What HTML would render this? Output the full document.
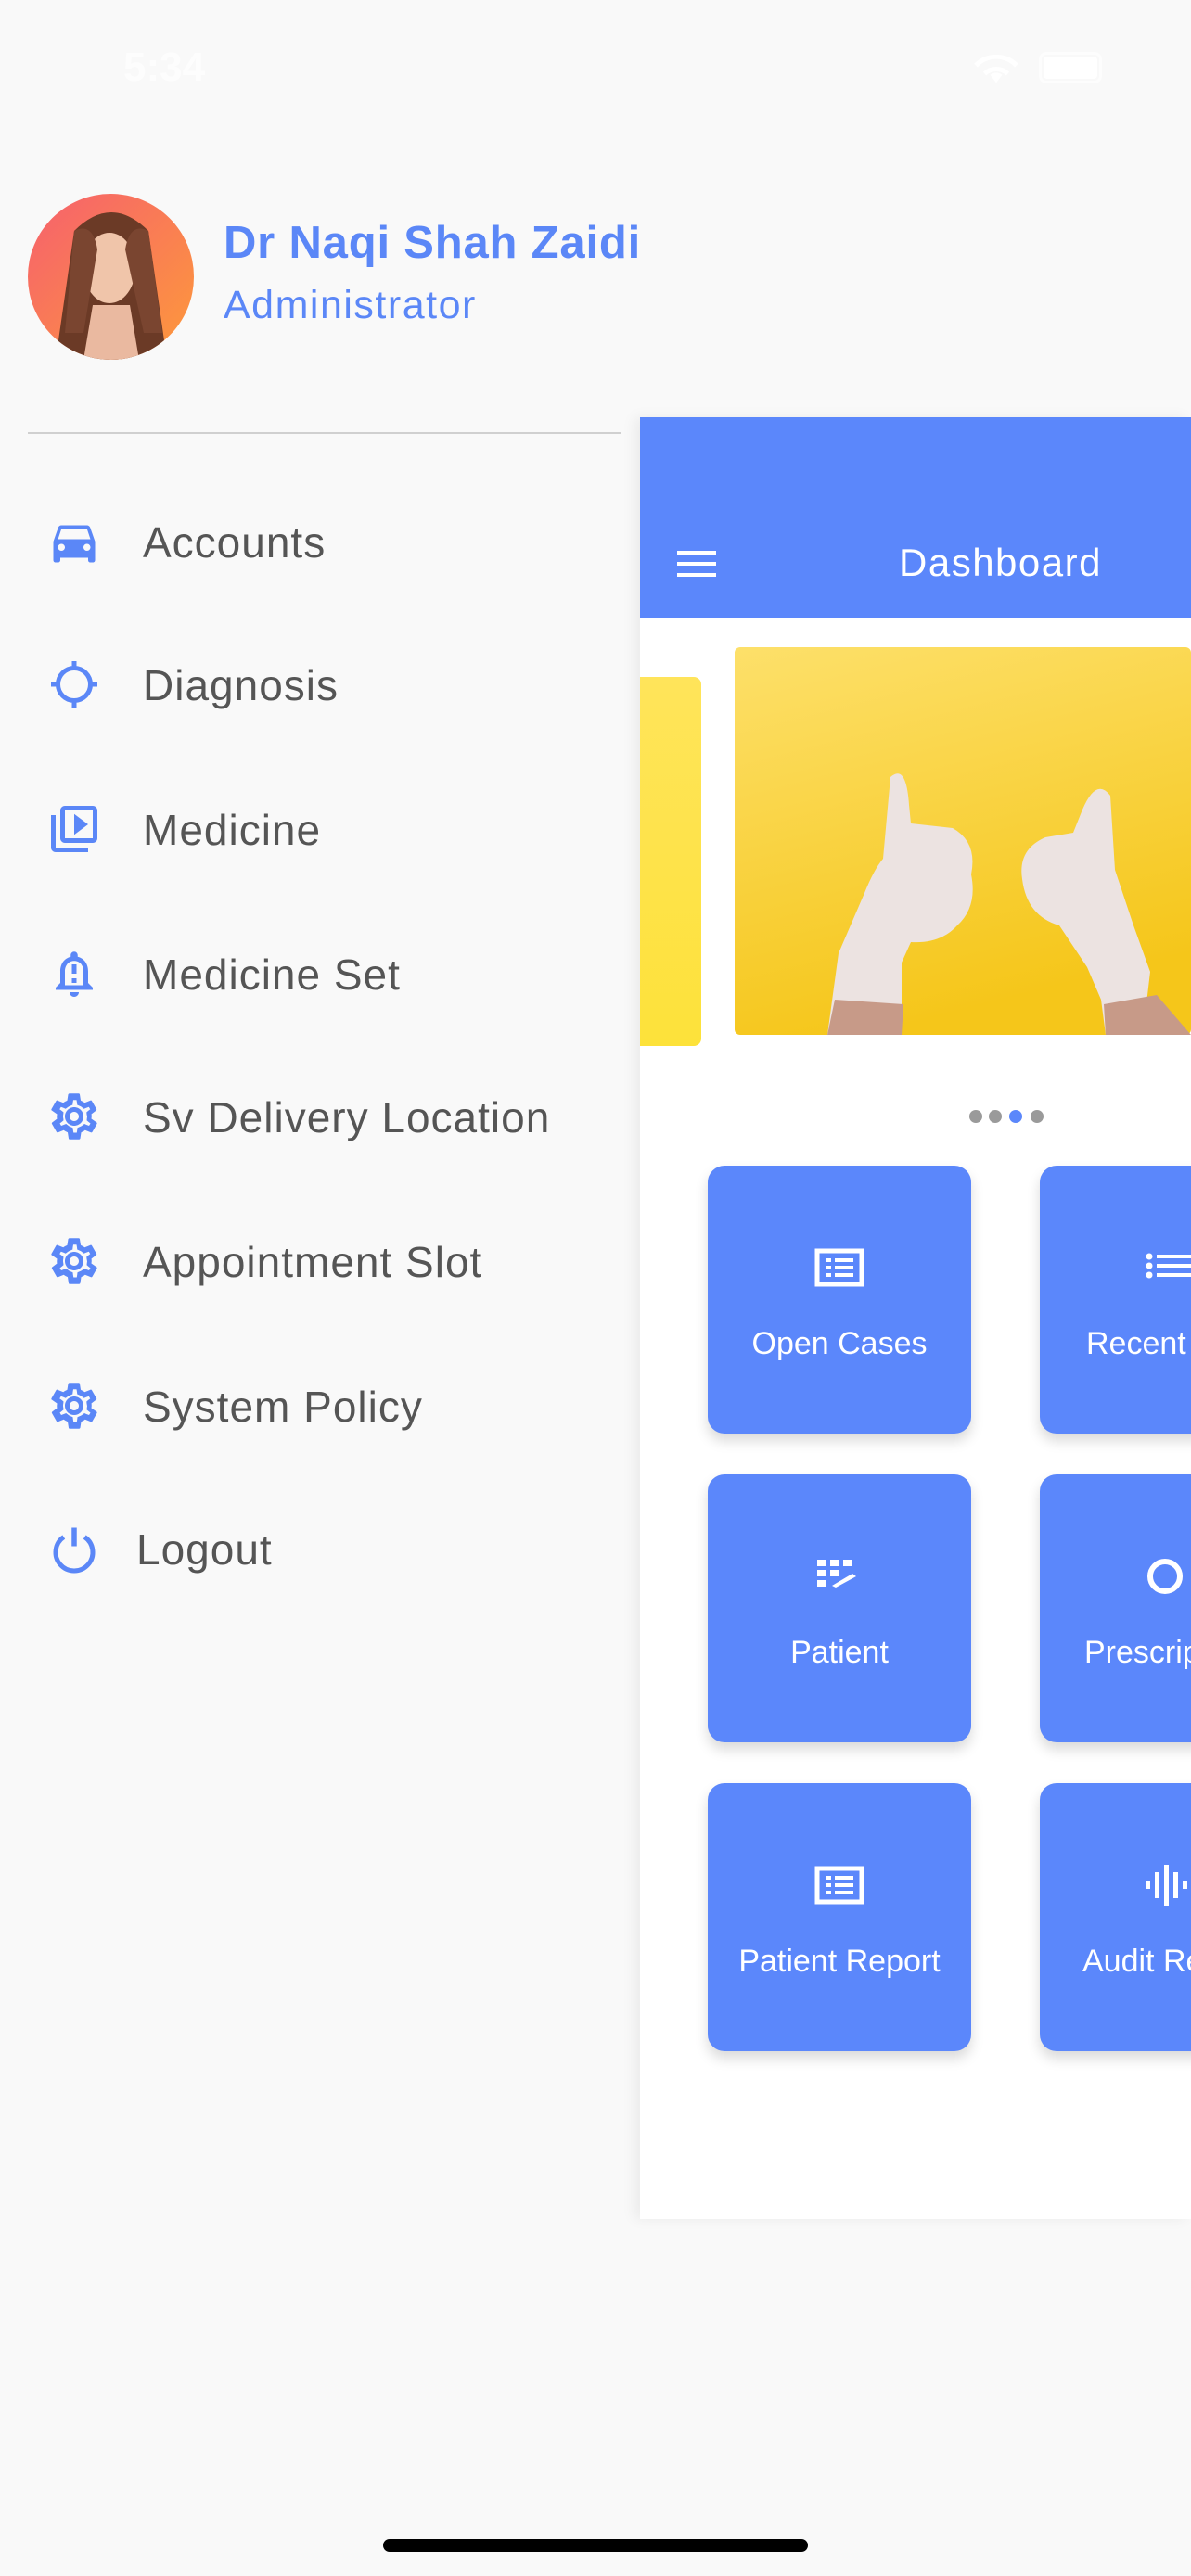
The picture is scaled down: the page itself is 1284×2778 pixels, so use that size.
<!DOCTYPE html>
<html><head><meta charset="utf-8">
<style>
*{margin:0;padding:0;box-sizing:border-box}
html,body{width:1284px;height:2778px;background:#f9f9f9;overflow:hidden;font-family:"Liberation Sans",sans-serif;position:relative}
.abs{position:absolute}
.name{left:241px;top:234px;font-size:49px;font-weight:bold;color:#5b87f7;letter-spacing:0.8px}
.role{left:241px;top:305px;font-size:43px;color:#5b87f7;letter-spacing:1.5px}
.item{position:absolute;left:0;width:680px;height:80px}
.item svg{position:absolute;left:46px;top:10px;width:68px;height:60px}
.item span{position:absolute;left:154px;top:14px;font-size:46px;color:#555;letter-spacing:1px}
.panel{left:690px;top:450px;width:594px;height:1943px;background:#fff;box-shadow:-6px 0 14px rgba(0,0,0,0.06);overflow:hidden}
.card{position:absolute;width:284px;height:289px;background:#5b87fb;border-radius:18px;box-shadow:0 8px 14px rgba(0,0,0,0.15)}
.card span{position:absolute;left:0;right:0;top:173px;text-align:center;color:#fff;font-size:34px;white-space:nowrap}
.card svg{position:absolute;left:112px;top:82px;width:60px;height:60px}
.dot{position:absolute;width:14px;height:14px;border-radius:50%;background:#9a9a9a}
</style></head><body>
<div class="abs" style="left:133px;top:48px;font-size:44px;color:#fff;font-weight:bold;opacity:.8">5:34</div>
<svg class="abs" style="left:1048px;top:52px" width="52" height="40" viewBox="0 0 24 18"><path d="M12 17l3-4a5 5 0 0 0-6 0z M12 9a9 9 0 0 0-6.5 2.6L7 13.4a7 7 0 0 1 10 0l1.5-1.8A9 9 0 0 0 12 9z M12 3A15 15 0 0 0 1 7.5l1.7 1.8A12.5 12.5 0 0 1 21.3 9.3L23 7.5A15 15 0 0 0 12 3z" fill="#fff"/></svg>
<div class="abs" style="left:1120px;top:56px;width:68px;height:34px;border:3px solid #fff;border-radius:8px;opacity:.7"></div>
<div class="abs" style="left:1125px;top:61px;width:58px;height:24px;background:#fff;border-radius:4px"></div>

<svg class="abs" style="left:30px;top:209px" width="179" height="179" viewBox="0 0 179 179">
<defs><linearGradient id="av" x1="0" y1="0" x2="1" y2="1"><stop offset="0" stop-color="#f6606e"/><stop offset="1" stop-color="#fd9a3a"/></linearGradient><clipPath id="c"><circle cx="89.5" cy="89.5" r="89.5"/></clipPath></defs>
<circle cx="89.5" cy="89.5" r="89.5" fill="url(#av)"/>
<g clip-path="url(#c)">
<path d="M50 40 Q90 0 130 40 L150 179 L30 179 Z" fill="#6b3a26"/>
<ellipse cx="88" cy="80" rx="28" ry="38" fill="#f0c5aa"/>
<path d="M70 120 L110 120 L120 179 L60 179 Z" fill="#eab9a0"/>
<path d="M50 40 Q70 30 75 60 L60 150 L40 150 Z" fill="#7a4530"/>
<path d="M130 40 Q110 30 105 60 L125 150 L145 150 Z" fill="#7a4530"/>
</g></svg>
<div class="abs name">Dr Naqi Shah Zaidi</div>
<div class="abs role">Administrator</div>
<div class="abs" style="left:30px;top:466px;width:640px;height:2px;background:#d0d0d0"></div>

<svg width="0" height="0" style="position:absolute"><defs><path id="gear" d="M19.4 13c0-.3.1-.6.1-1s0-.7-.1-1l2.1-1.6c.2-.2.2-.4.1-.6l-2-3.5c-.1-.2-.4-.3-.6-.2l-2.5 1c-.5-.4-1.1-.7-1.7-1l-.4-2.6c0-.2-.2-.4-.5-.4h-4c-.2 0-.4.2-.5.4l-.4 2.6c-.6.3-1.2.6-1.7 1l-2.5-1c-.2-.1-.5 0-.6.2l-2 3.5c-.1.2-.1.5.1.6L4.6 11c0 .3-.1.7-.1 1s0 .7.1 1l-2.1 1.6c-.2.2-.2.4-.1.6l2 3.5c.1.2.4.3.6.2l2.5-1c.5.4 1.1.7 1.7 1l.4 2.6c0 .2.2.4.5.4h4c.2 0 .4-.2.5-.4l.4-2.6c.6-.3 1.2-.6 1.7-1l2.5 1c.2.1.5 0 .6-.2l2-3.5c.1-.2.1-.5-.1-.6L19.4 13zm-1.9-1.4c0 .2.1.4.1.4s0 .3-.1.8l-.1.9.7.6.9.7-.6 1-1.1-.4-.9-.4-.8.6c-.4.3-.8.5-1.3.7l-.9.4-.1.9-.2 1.2h-1.4l-.2-1.2-.1-.9-.9-.4c-.5-.2-.9-.4-1.200-.7l-.8-.6-1 .4-1.1.4-.6-1 .9-.7.7-.6-.1-.9c-.1-.5-.1-.7-.1-.9s0-.4.1-.8l.1-.9-.7-.6-1-.7.6-1 1.1.4.9.4.8-.6c.4-.3.8-.5 1.3-.7l.9-.4.1-.9.2-1.2h1.4l.2 1.2.1.9.9.4c.5.2.9.4 1.2.7l.8.6 1-.4 1.1-.4.6 1-.9.7-.7.6.1.9zM12 8c-2.2 0-4 1.8-4 4s1.8 4 4 4 4-1.8 4-4-1.8-4-4-4zm0 6c-1.1 0-2-.9-2-2s.9-2 2-2 2 .9 2 2-.9 2-2 2z"/></defs></svg>

<div class="item" style="top:544px"><svg viewBox="0 0 24 24"><path d="M18.9 6c-.2-.6-.8-1-1.4-1h-11c-.7 0-1.2.4-1.4 1L3 12v8c0 .6.4 1 1 1h1c.6 0 1-.4 1-1v-1h12v1c0 .6.4 1 1 1h1c.6 0 1-.4 1-1v-8l-2.1-6zM6.5 16c-.8 0-1.5-.7-1.5-1.5S5.7 13 6.5 13s1.5.7 1.5 1.5S7.3 16 6.5 16zm11 0c-.8 0-1.5-.7-1.5-1.5s.7-1.5 1.5-1.5 1.5.7 1.5 1.5-.7 1.5-1.5 1.5zM5 11l1.5-4.5h11L19 11H5z" fill="#5b87f7"/></svg><span>Accounts</span></div>
<div class="item" style="top:698px"><svg viewBox="0 0 24 24"><circle cx="12" cy="12" r="7" fill="none" stroke="#5b87f7" stroke-width="2"/><path d="M12 2v4M12 18v4M2 12h4M18 12h4" stroke="#5b87f7" stroke-width="2"/></svg><span>Diagnosis</span></div>
<div class="item" style="top:854px"><svg viewBox="0 0 24 24"><path d="M4 6H2v14c0 1.1.9 2 2 2h14v-2H4V6zm16-4H8c-1.1 0-2 .9-2 2v12c0 1.1.9 2 2 2h12c1.1 0 2-.9 2-2V4c0-1.1-.9-2-2-2zm0 14H8V4h12v12zM12 5.5v9l6-4.5z" fill="#5b87f7"/></svg><span>Medicine</span></div>
<div class="item" style="top:1010px"><svg viewBox="0 0 24 24"><path d="M12 22c1.1 0 2-.9 2-2h-4c0 1.1.9 2 2 2zm6-6v-5c0-3.1-1.6-5.6-4.5-6.3V4c0-.8-.7-1.5-1.5-1.5s-1.5.7-1.5 1.5v.7C7.6 5.4 6 7.9 6 11v5l-2 2v1h16v-1l-2-2zm-2 1H8v-6c0-2.5 1.5-4.5 4-4.5s4 2 4 4.5v6zM11 8h2v4h-2zm0 6h2v2h-2z" fill="#5b87f7"/></svg><span>Medicine Set</span></div>
<div class="item" style="top:1164px"><svg viewBox="0 0 24 24"><use href="#gear" fill="#5b87f7"/></svg><span>Sv Delivery Location</span></div>
<div class="item" style="top:1320px"><svg viewBox="0 0 24 24"><use href="#gear" fill="#5b87f7"/></svg><span>Appointment Slot</span></div>
<div class="item" style="top:1476px"><svg viewBox="0 0 24 24"><use href="#gear" fill="#5b87f7"/></svg><span>System Policy</span></div>
<div class="item" style="top:1630px"><svg viewBox="0 0 24 24"><path d="M7.5 7A8 8 0 1 0 16.5 7" fill="none" stroke="#5b87f7" stroke-width="2"/><path d="M12 3v8" stroke="#5b87f7" stroke-width="2.2"/></svg><span style="left:147px">Logout</span></div>

<div class="abs panel">
 <div class="abs" style="left:0;top:0;width:594px;height:216px;background:#5b87fb"></div>
 <div class="abs" style="left:40px;top:144px;width:42px;height:4px;background:#fff"></div>
 <div class="abs" style="left:40px;top:156px;width:42px;height:4px;background:#fff"></div>
 <div class="abs" style="left:40px;top:168px;width:42px;height:4px;background:#fff"></div>
 <div class="abs" style="left:279px;top:133px;font-size:42px;color:#fff;letter-spacing:1.5px">Dashboard</div>
 <div class="abs" style="left:0;top:280px;width:66px;height:398px;background:linear-gradient(#ffe45a,#fde23a);border-radius:0 8px 8px 0"></div>
 <svg class="abs" style="left:102px;top:248px" width="492" height="418" viewBox="0 0 492 418">
  <defs><linearGradient id="y" x1="0" y1="0" x2="0.3" y2="1"><stop offset="0" stop-color="#fde06a"/><stop offset="1" stop-color="#f5c61a"/></linearGradient></defs>
  <rect width="492" height="418" rx="6" fill="url(#y)"/>
  <path d="M100 418 L112 330 L140 265 Q150 240 160 228 L168 140 Q185 125 188 170 L190 190 L235 195 Q262 210 255 245 Q262 280 240 300 Q222 320 190 318 L180 340 L180 418 Z" fill="#ece3e1"/>
  <path d="M108 380 L182 385 L180 418 L100 418 Z" fill="#c79a88"/>
  <path d="M440 418 L448 350 L430 300 L410 240 L405 160 Q390 140 375 175 L365 200 L335 205 Q305 218 310 250 Q315 290 350 300 L380 345 L395 380 L400 418 Z" fill="#ece3e1"/>
  <path d="M398 385 L455 375 L492 418 L400 418 Z" fill="#c79a88"/>
 </svg>
 <div class="dot" style="left:355px;top:747px"></div>
 <div class="dot" style="left:376px;top:747px"></div>
 <div class="dot" style="left:398px;top:747px;background:#5b87fb"></div>
 <div class="dot" style="left:421px;top:747px"></div>

 <div class="card" style="left:73px;top:807px"><svg viewBox="0 0 60 60"><rect x="6" y="10" width="48" height="36" fill="none" stroke="#fff" stroke-width="5"/><rect x="16" y="18" width="5" height="4" fill="#fff"/><rect x="25" y="18" width="20" height="4" fill="#fff"/><rect x="16" y="26" width="5" height="4" fill="#fff"/><rect x="25" y="26" width="20" height="4" fill="#fff"/><rect x="16" y="34" width="5" height="4" fill="#fff"/><rect x="25" y="34" width="20" height="4" fill="#fff"/></svg><span>Open Cases</span></div>
 <div class="card" style="left:431px;top:807px"><svg viewBox="0 0 60 60" style="left:110px"><circle cx="8" cy="16" r="3.5" fill="#fff"/><circle cx="8" cy="26" r="3.5" fill="#fff"/><circle cx="8" cy="36" r="3.5" fill="#fff"/><rect x="16" y="14" width="44" height="4" fill="#fff"/><rect x="16" y="24" width="44" height="4" fill="#fff"/><rect x="16" y="34" width="44" height="4" fill="#fff"/></svg><span style="text-align:left;left:50px">Recent Cases</span></div>
 <div class="card" style="left:73px;top:1140px"><svg viewBox="0 0 60 60"><rect x="6" y="10" width="10" height="7" fill="#fff"/><rect x="20" y="10" width="10" height="7" fill="#fff"/><rect x="34" y="10" width="10" height="7" fill="#fff"/><rect x="6" y="21" width="10" height="7" fill="#fff"/><rect x="20" y="21" width="10" height="7" fill="#fff"/><rect x="6" y="32" width="10" height="7" fill="#fff"/><path d="M22 38 L44 25 L48 28 L26 40 Z" fill="#fff"/></svg><span>Patient</span></div>
 <div class="card" style="left:431px;top:1140px"><svg viewBox="0 0 60 60" style="left:105px"><circle cx="30" cy="28" r="16" fill="none" stroke="#fff" stroke-width="6"/></svg><span style="text-align:left;left:48px">Prescription</span></div>
 <div class="card" style="left:73px;top:1473px"><svg viewBox="0 0 60 60"><rect x="6" y="10" width="48" height="36" fill="none" stroke="#fff" stroke-width="5"/><rect x="16" y="18" width="5" height="4" fill="#fff"/><rect x="25" y="18" width="20" height="4" fill="#fff"/><rect x="16" y="26" width="5" height="4" fill="#fff"/><rect x="25" y="26" width="20" height="4" fill="#fff"/><rect x="16" y="34" width="5" height="4" fill="#fff"/><rect x="25" y="34" width="20" height="4" fill="#fff"/></svg><span>Patient Report</span></div>
 <div class="card" style="left:431px;top:1473px"><svg viewBox="0 0 60 60" style="left:112px"><rect x="2" y="24" width="5" height="8" fill="#fff"/><rect x="12" y="14" width="5" height="28" fill="#fff"/><rect x="22" y="6" width="5" height="44" fill="#fff"/><rect x="32" y="14" width="5" height="28" fill="#fff"/><rect x="42" y="24" width="5" height="8" fill="#fff"/></svg><span style="text-align:left;left:46px">Audit Report</span></div>
</div>
<div class="abs" style="left:413px;top:2738px;width:458px;height:14px;background:#000;border-radius:7px"></div>
</body></html>
